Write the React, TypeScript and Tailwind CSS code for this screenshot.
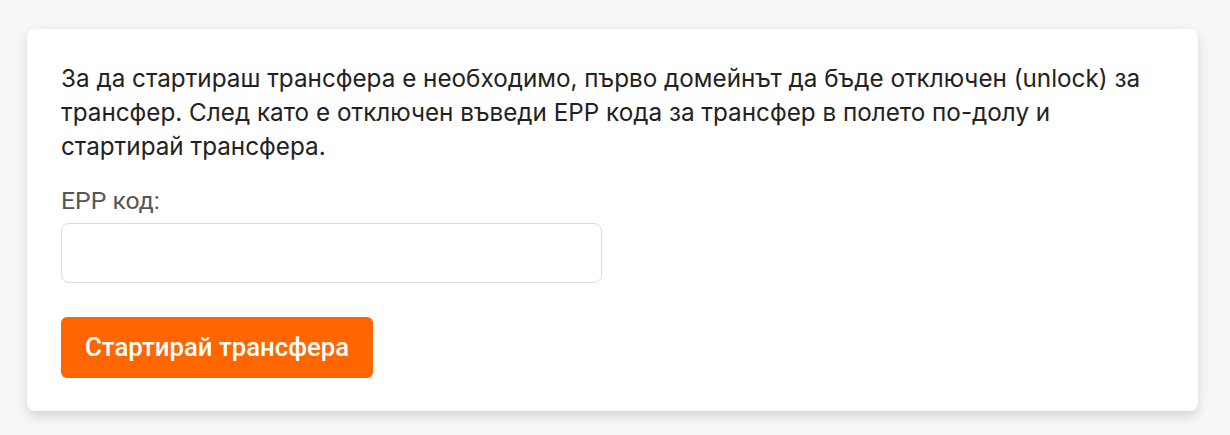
export default function App() {
    return (
        <div className="min-h-[435px] bg-[#f7f7f9] px-[27px] pt-[29px]">
            <div className="bg-white rounded-lg shadow-[0_5px_12px_rgba(0,0,0,0.14)] px-[34px] pt-[33px] pb-[33px] w-[1171px]">
                <p className="font-['Inter',sans-serif] text-[24.25px] leading-[34px] text-[#222]">
                    За да стартираш трансфера е необходимо, първо домейнът да бъде отключен (unlock) за
                    трансфер. След като е отключен въведи EPP кода за трансфер в полето по-долу и
                    стартирай трансфера.
                </p>
                <div className="mt-[22px] font-['Roboto',sans-serif]">
                    <label className="block text-[24.75px] leading-[30px] text-[#555]">ЕРР код:</label>
                    <input
                        type="text"
                        className="mt-[7px] block w-[541px] h-[60px] rounded-lg border border-[#dddddd] bg-white px-3 outline-none"
                    />
                    <button className="mt-[34px] h-[61px] px-[24px] rounded-md bg-[#ff6600] text-white text-[25.75px] font-medium">
                        Стартирай трансфера
                    </button>
                </div>
            </div>
        </div>
    );
}
